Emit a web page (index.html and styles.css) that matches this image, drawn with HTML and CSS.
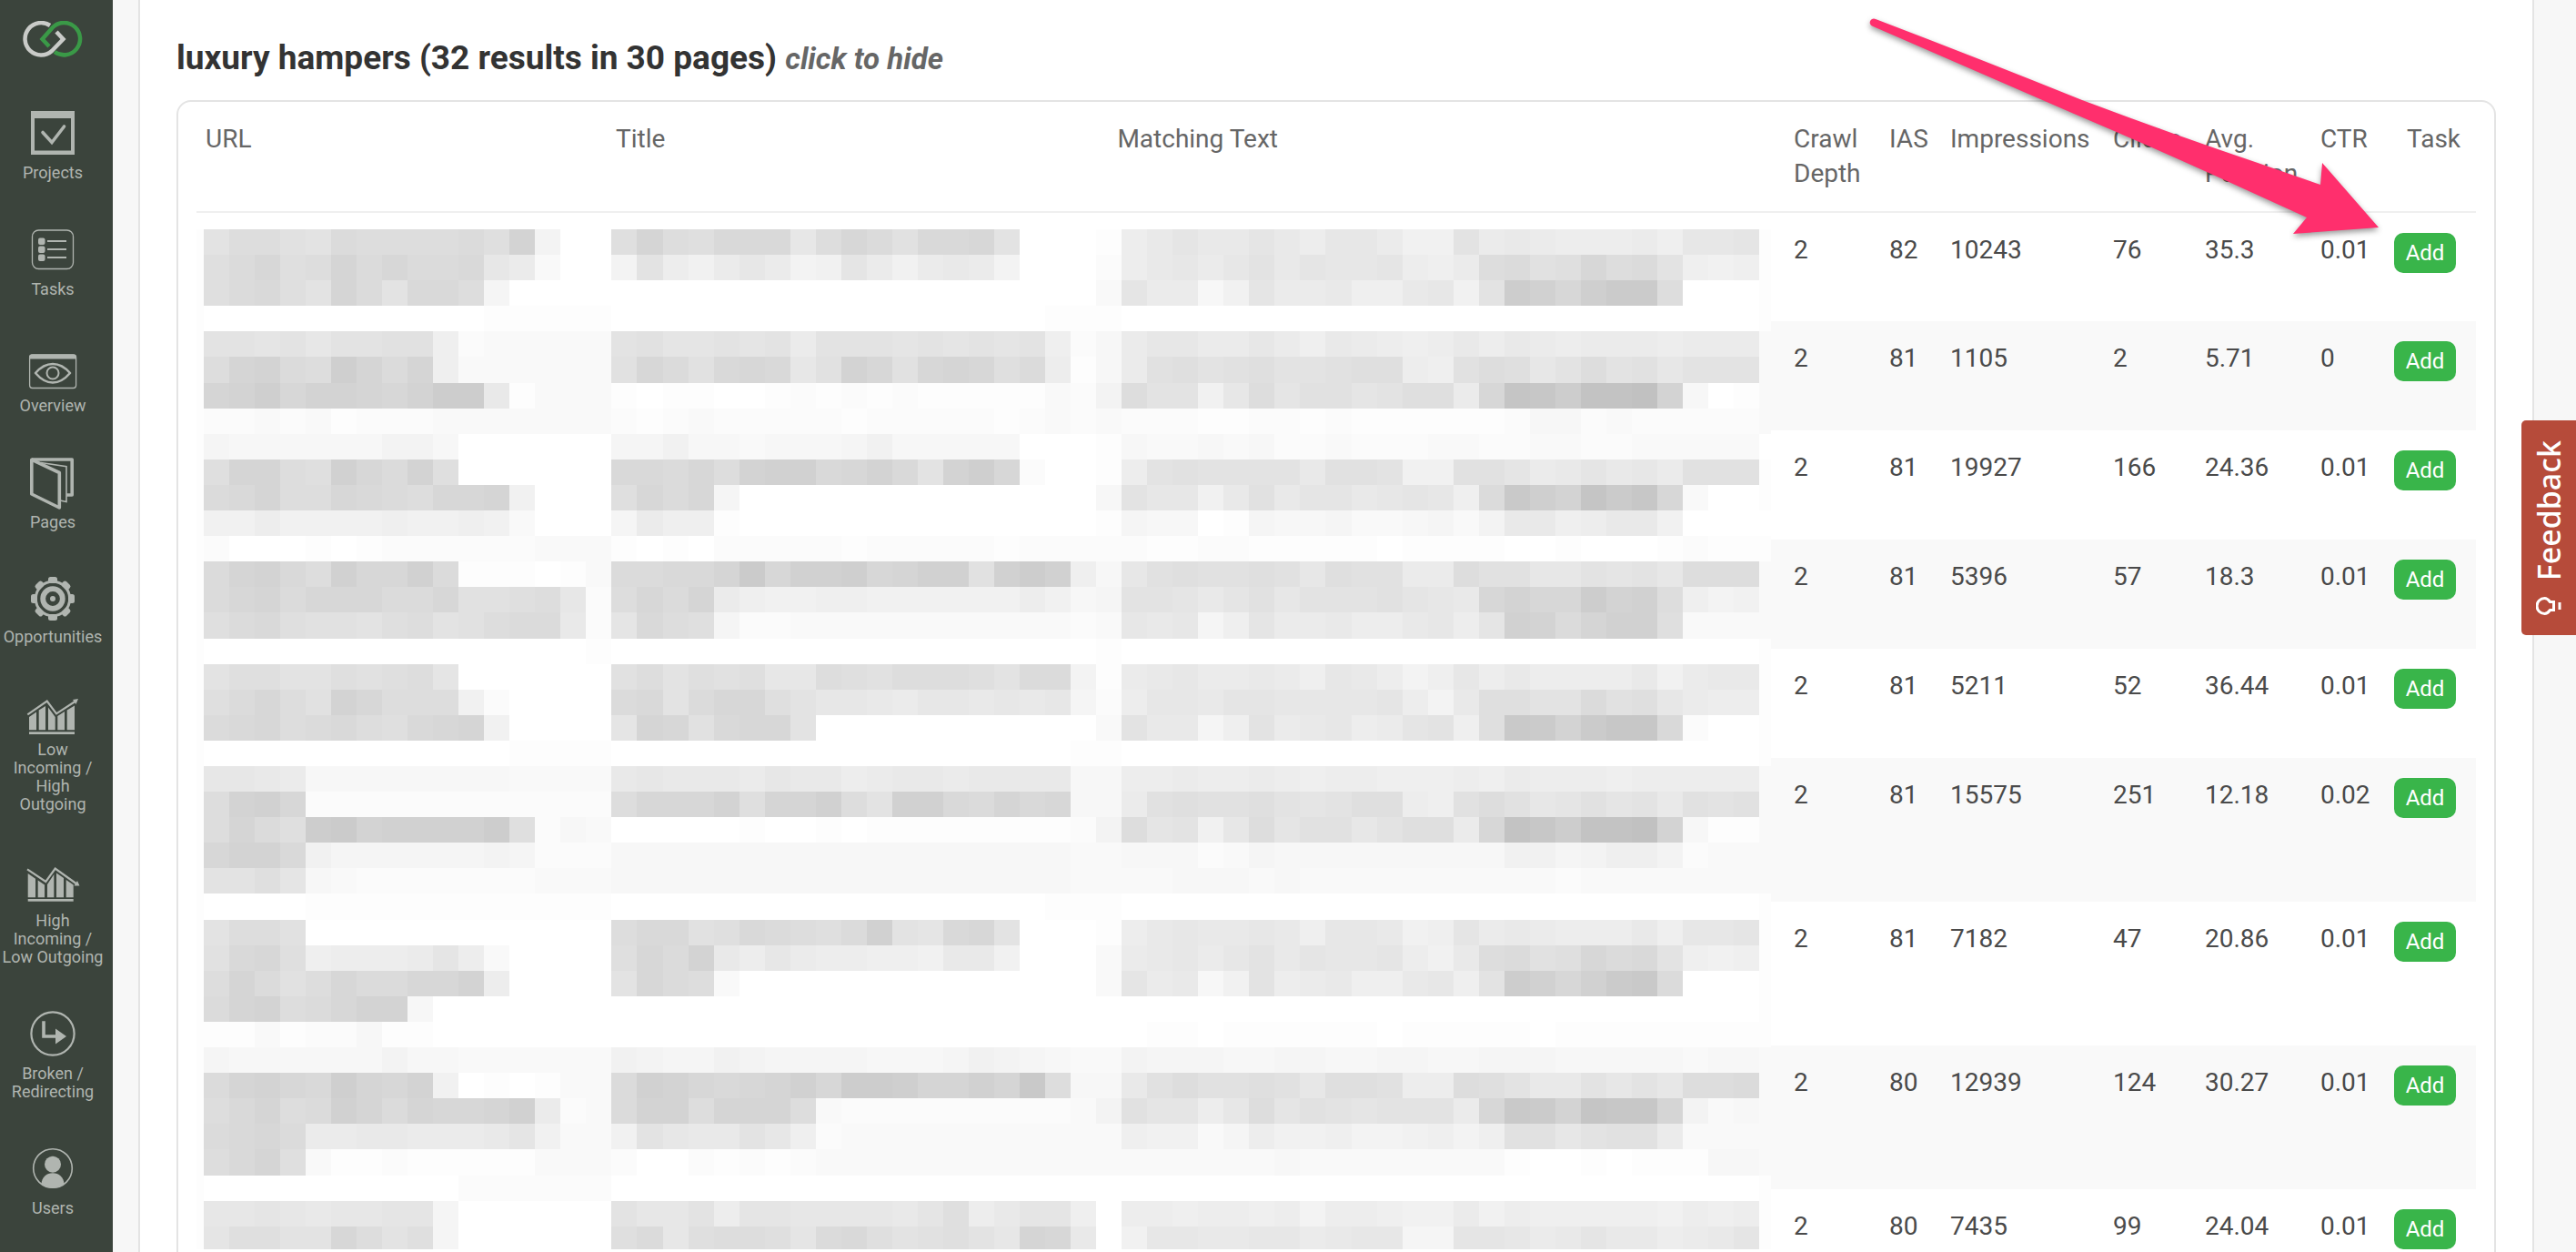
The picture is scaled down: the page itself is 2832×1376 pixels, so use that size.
FILE: index.html
```html
<!DOCTYPE html>
<html lang="en">
<head>
    <meta charset="UTF-8">
    <meta name="viewport" content="width=device-width, initial-scale=1.0">
    <title>Opportunities</title>
    <link rel="stylesheet" href="styles.css">
</head>
<body>

    <nav class="sidebar">
        <a href="#" class="logo" aria-label="Home">
            <svg width="66" height="40" viewBox="25 23 66 40" fill="none" stroke-width="4.5">
                <path stroke="#3a9947" d="M60 57 A17.7 17.7 0 1 0 58 30 L46.500 43 L54 51"/>
                <path stroke="#c9cbc8" d="M55 28 A17.7 17.7 0 1 0 57 56 L69.500 43 L62 35"/>
            </svg>
        </a>
        <a href="#" class="nav-item">
            <svg width="60" height="60" viewBox="0 0 60 60" fill="none" stroke="currentColor">
                <path fill="currentColor" stroke="none" fill-rule="evenodd" d="M6 2h48v48H6z M10 10v35.500h40V10z"/>
                <path stroke-width="3.600" stroke-linecap="round" d="M19 25.500 L29 36.500 L42.500 19"/>
            </svg>
            <span>Projects</span>
        </a>
        <a href="#" class="nav-item">
            <svg width="60" height="60" viewBox="0 0 60 60" fill="none" stroke="currentColor">
                <rect x="7.500" y="5" width="45" height="42.500" rx="7" stroke-width="1.300"/>
                <g fill="currentColor" stroke="none">
                    <rect x="14" y="13.500" width="7.500" height="7.500" rx="2"/>
                    <rect x="14" y="22.500" width="7.500" height="7.500" rx="2"/>
                    <rect x="14" y="31.500" width="7.500" height="7.500" rx="2"/>
                </g>
                <path stroke-width="2" d="M24 17h21M24 26h21M24 35h21"/>
            </svg>
            <span>Tasks</span>
        </a>
        <a href="#" class="nav-item">
            <svg width="60" height="60" viewBox="0 0 60 60" fill="none" stroke="currentColor">
                <rect x="4.600" y="14" width="51" height="36.500" rx="3" stroke-width="1.300"/>
                <path fill="currentColor" stroke="none" d="M4 18.500v-2a3 3 0 0 1 3-3h46a3 3 0 0 1 3 3v2z"/>
                <path stroke-width="2.600" stroke-linejoin="round" d="M11 34 C17 27 23 24 30 24 S43 27 49 34 C43 41 37 44.500 30 44.500 S17 41 11 34z"/>
                <circle cx="30" cy="34" r="6.500" stroke-width="2"/>
            </svg>
            <span>Overview</span>
        </a>
        <a href="#" class="nav-item">
            <svg width="60" height="60" viewBox="0 0 60 60" fill="none" stroke="currentColor">
                <g stroke-width="3.600" stroke-linejoin="round">
                    <path d="M6.800 1.200 L37.300 15.500 V54 L6.800 39z"/>
                    <path d="M6.800 1 H51.200 V40 H45"/>
                </g>
                <path stroke-width="1.600" d="M17 4.500 L45 8.800 V47.500 L38 46"/>
            </svg>
            <span>Pages</span>
        </a>
        <a href="#" class="nav-item">
            <svg width="60" height="58" viewBox="0 0 60 58" fill="none" stroke="currentColor">
                <circle cx="30" cy="26" r="18.700" stroke-width="3"/>
                <g fill="currentColor" stroke="none">
                    <rect id="tooth" x="25" y="2" width="10" height="7" rx="2.500"/>
                    <use href="#tooth" transform="rotate(45 30 26)"/>
                    <use href="#tooth" transform="rotate(90 30 26)"/>
                    <use href="#tooth" transform="rotate(135 30 26)"/>
                    <use href="#tooth" transform="rotate(180 30 26)"/>
                    <use href="#tooth" transform="rotate(225 30 26)"/>
                    <use href="#tooth" transform="rotate(270 30 26)"/>
                    <use href="#tooth" transform="rotate(315 30 26)"/>
                </g>
                <circle cx="30" cy="26" r="10.800" stroke-width="5.800"/>
                <circle cx="30" cy="26" r="3" fill="currentColor" stroke="none"/>
            </svg>
            <span>Opportunities</span>
        </a>
        <a href="#" class="nav-item">
            <svg width="60" height="56" viewBox="0 0 60 56" fill="currentColor">
                <path fill="none" stroke="currentColor" stroke-width="2.200" d="M2.300 27.300 L23.700 12.500 L34 26.300 L56 12"/>
                <path d="M58 10 L52 11 L55.500 16z"/>
                <path d="M4 30 L12 24.500 V44.300 H4z M14.700 22.500 L18 20.500 L22 18 V44.300 H14.700z M25 19.500 L32.700 30 V44.300 H25z M35.300 29 L43 24 V44.300 H35.300z M45.700 22.500 L54 17.500 V44.300 H45.700z"/>
                <rect x="4" y="46.300" width="50" height="2.700"/>
            </svg>
            <span>Low<br>Incoming /<br>High<br>Outgoing</span>
        </a>
        <a href="#" class="nav-item">
            <svg width="60" height="60" viewBox="0 0 60 60" fill="currentColor">
                <path fill="none" stroke="currentColor" stroke-width="2.200" d="M2 13.300 L22.300 27 L32.700 12.500 L57 30"/>
                <path d="M59.500 31.500 L53.500 31.500 L57 26z"/>
                <path d="M2.700 18 L11 23.700 V44.300 H2.700z M13.700 25.500 L21 30.500 V44.300 H13.700z M24 30 L31.300 19 V44.300 H24z M34 17.500 L42 23 V44.300 H34z M44.700 25 L52.700 30.500 V44.300 H44.700z"/>
                <rect x="2.700" y="46" width="50" height="2.700"/>
            </svg>
            <span>High<br>Incoming /<br>Low Outgoing</span>
        </a>
        <a href="#" class="nav-item">
            <svg width="60" height="60" viewBox="0 0 60 60" fill="none" stroke="currentColor">
                <circle cx="30" cy="26" r="23.600" stroke-width="2.200"/>
                <path stroke-width="3.600" d="M20 12.300 V29 H34"/>
                <path fill="currentColor" stroke="none" d="M33 20.500 L45 29 L33 37.500z"/>
            </svg>
            <span>Broken /<br>Redirecting</span>
        </a>
        <a href="#" class="nav-item">
            <svg width="60" height="60" viewBox="0 0 60 60" fill="none" stroke="currentColor">
                <circle cx="30" cy="26" r="21.300" stroke-width="1.600"/>
                <circle cx="30" cy="21.700" r="9" fill="currentColor" stroke="none"/>
                <path fill="currentColor" stroke="none" d="M17.500 43 C18 36 23 31.300 30 31.300 S42 36 42.500 43 Q30 52.500 17.500 43z"/>
            </svg>
            <span>Users</span>
        </a>
    </nav>

    <main class="panel">
        <h3 class="keyword">luxury hampers (32 results in 30 pages) <em>click to hide</em></h3>

        <div class="results">
            <table>
                <colgroup>
                    <col class="col-url">
                    <col class="col-title">
                    <col class="col-text">
                    <col class="col-depth">
                    <col class="col-ias">
                    <col class="col-impressions">
                    <col class="col-clicks">
                    <col class="col-position">
                    <col class="col-ctr">
                    <col class="col-task">
                </colgroup>
                <thead>
                    <tr>
                        <th>URL</th>
                        <th>Title</th>
                        <th>Matching Text</th>
                        <th>Crawl Depth</th>
                        <th>IAS</th>
                        <th>Impressions</th>
                        <th>Clicks</th>
                        <th>Avg. Position</th>
                        <th>CTR</th>
                        <th class="task">Task</th>
                    </tr>
                </thead>
                <tbody>
                    <tr>
                        <td></td><td></td><td></td>
                        <td>2</td><td>82</td><td>10243</td><td>76</td><td>35.3</td><td>0.01</td>
                        <td><button type="button">Add</button></td>
                    </tr>
                    <tr>
                        <td></td><td></td><td></td>
                        <td>2</td><td>81</td><td>1105</td><td>2</td><td>5.71</td><td>0</td>
                        <td><button type="button">Add</button></td>
                    </tr>
                    <tr>
                        <td></td><td></td><td></td>
                        <td>2</td><td>81</td><td>19927</td><td>166</td><td>24.36</td><td>0.01</td>
                        <td><button type="button">Add</button></td>
                    </tr>
                    <tr>
                        <td></td><td></td><td></td>
                        <td>2</td><td>81</td><td>5396</td><td>57</td><td>18.3</td><td>0.01</td>
                        <td><button type="button">Add</button></td>
                    </tr>
                    <tr>
                        <td></td><td></td><td></td>
                        <td>2</td><td>81</td><td>5211</td><td>52</td><td>36.44</td><td>0.01</td>
                        <td><button type="button">Add</button></td>
                    </tr>
                    <tr class="long">
                        <td></td><td></td><td></td>
                        <td>2</td><td>81</td><td>15575</td><td>251</td><td>12.18</td><td>0.02</td>
                        <td><button type="button">Add</button></td>
                    </tr>
                    <tr class="long">
                        <td></td><td></td><td></td>
                        <td>2</td><td>81</td><td>7182</td><td>47</td><td>20.86</td><td>0.01</td>
                        <td><button type="button">Add</button></td>
                    </tr>
                    <tr class="long">
                        <td></td><td></td><td></td>
                        <td>2</td><td>80</td><td>12939</td><td>124</td><td>30.27</td><td>0.01</td>
                        <td><button type="button">Add</button></td>
                    </tr>
                    <tr class="long">
                        <td></td><td></td><td></td>
                        <td>2</td><td>80</td><td>7435</td><td>99</td><td>24.04</td><td>0.01</td>
                        <td><button type="button">Add</button></td>
                    </tr>
                </tbody>
            </table>
            <!-- Pixelated cover for the URL, Title and Matching Text columns, filled by mosaic.js -->
            <svg class="mosaic" id="mosaic" viewBox="-0.28 0 61.75 39.9" preserveAspectRatio="none" shape-rendering="crispEdges" aria-hidden="true"></svg>
        </div>

        <svg class="pointer" width="600" height="280" viewBox="2040 0 600 280" aria-hidden="true">
            <path fill="#ff2f6d" d="M2062 21 Q2180 66 2289 110 Q2390 148 2485 180 L2551 203 L2553 179 L2615 250 L2521 257 L2536 239 L2435 193 Q2360 159 2280 125 L2058 28.500 A4 4 0 0 1 2062 21z"/>
        </svg>
    </main>

    <button type="button" class="feedback">
        <svg width="28" height="20" viewBox="0 0 28 20" fill="none" stroke="#fff" stroke-width="3" aria-hidden="true">
            <path d="M19.500 5.500 L15.500 5.500 C13.500 2.800 11.500 1.500 9.500 1.500 A8.300 8.300 0 0 0 9.500 18.500 C11.500 18.500 13.500 17.200 15.500 14.500 L19.500 14.500 z"/>
            <path d="M26 6 V14"/>
        </svg>
        <span>Feedback</span>
    </button>

    <script src="mosaic.js"></script>
</body>
</html>
```
FILE: styles.css
```css
* {
    box-sizing: border-box;
}

body {
    font-family: Roboto, 'Liberation Sans', sans-serif;
    font-size: 28px;
    line-height: 38px;
    color: #4a4a4a;
    background-color: #f7f7f7;
    margin: 0;
    display: flex;
    height: 100vh;
    overflow: hidden;
}

/* Sidebar */
.sidebar {
    flex: none;
    width: 124px;
    padding: 23px 8px 0 0;
    background-color: #3b443c;
    display: flex;
    flex-direction: column;
    align-items: center;
    gap: 48px;
}

.logo {
    display: flex;
    margin-bottom: 9px;
}

.nav-item {
    display: flex;
    flex-direction: column;
    align-items: center;
    color: #b0b5b0;
    font-size: 18px;
    line-height: 20px;
    text-align: center;
    text-decoration: none;
    white-space: nowrap;
}

.nav-item svg {
    overflow: visible;
}

/* Content */
.panel {
    position: relative;
    flex: 1;
    min-width: 0;
    margin: 0 46px 0 28px;
    padding: 40px 40px 0;
    background-color: #fff;
    border: 2px solid #e4e4e4;
    border-width: 0 2px;
}

.keyword {
    margin: 0 0 22px;
    font-size: 37px;
    line-height: 48px;
    font-weight: 700;
    color: #333;
}

.keyword em {
    font-size: 33px;
    line-height: 1;
    color: #666;
}

.results {
    position: relative;
    border: 2px solid #e4e4e4;
    border-radius: 16px;
    padding: 0 20px;
}

table {
    width: 100%;
    table-layout: fixed;
    border-collapse: collapse;
}

.col-url { width: 18%; }
.col-title { width: 22%; }
.col-depth { width: 105px; }
.col-ias { width: 67px; }
.col-impressions { width: 179px; }
.col-clicks { width: 101px; }
.col-position { width: 127px; }
.col-ctr { width: 81px; }
.col-task { width: 100px; }

th,
td {
    padding: 22px 0 22px 10px;
    text-align: left;
    vertical-align: top;
}

th {
    font-weight: 400;
    color: #666;
}

thead tr {
    border-bottom: 2px solid #efefef;
}

th.task {
    padding-left: 24px;
}

tbody tr {
    height: 120px;
}

tbody tr.long {
    height: 158px;
}

tbody tr:nth-child(even) {
    background-color: #f9f9f9;
}

td button {
    display: block;
    width: 68px;
    height: 44px;
    padding: 0;
    border: none;
    border-radius: 10px;
    background-color: #39b54a;
    color: #fff;
    font-family: inherit;
    font-size: 24px;
    cursor: pointer;
}

.mosaic {
    position: absolute;
    top: 140px;
    left: 20px;
    width: 68%;
    height: 1121px;
}

.pointer {
    position: absolute;
    top: 0;
    right: 144px;
    filter: drop-shadow(0 3px 3px rgba(0, 0, 0, 0.4));
}

/* Feedback tab on the right edge */
.feedback {
    position: fixed;
    right: 0;
    top: 462px;
    width: 60px;
    height: 236px;
    padding: 0;
    border: none;
    border-radius: 5px 0 0 5px;
    background-color: #b64b3a;
    color: #fff;
    display: flex;
    flex-direction: column-reverse;
    align-items: center;
    justify-content: center;
    gap: 18px;
    font-family: 'Noto Sans', sans-serif;
    font-size: 34px;
    font-weight: 500;
    line-height: 40px;
    cursor: pointer;
}

.feedback span {
    writing-mode: vertical-rl;
    transform: rotate(180deg);
}
```
FILE: mosaic.js
```js
// One string per mosaic line: URL | Title | Matching Text.
// Each character is a base 36 level, 0 is white and every step is 2 darker.
const lines = [
    'ehhfeihhhhigm600|glhgjjjchkifjjke0001|9bdbbdb9cca77eaba999a8ccd1',
    'gikghlikiijca300|6e97aca67da7aba60002|9bcacebdccd98ahifgkhie8781',
    'gijgeliejjh50000|00000000000000000003|daa47daab88bc7epnkoqqh0001',
    '0000000000011111|00000000000000000111|00000000000000000000000001',
    'eedeceeff8233333|efddedeaeeededede824|accaaca8ba989b9ba9aaa9aaa3',
    'hlmiholil8333333|fkifjkjcfmkfklkgi914|afgefgeefgg98fhgcehefceee3',
    'lmokmmlkmppb1333|10110012121211111326|hee7chdffdeggaktspuuvm4013',
    '2232312223333333|21232222212222212323|22211221211111124423222223',
    '5444444664000000|55744344457444440001|43343422322233223322333330',
    'gllhgnkimg000000|jjikhmnnjkmjemok2001|9efeeeebffe77ffdabdbcafff1',
    'ijlhhkjihkkl7000|gkik5000000000000004|ecc7bfbddbcdc8iromtqsk3001',
    '7797777877873000|5a881000000000000001|544015445334536bb89bb70000',
    '2000101222222333|10102222212222212222|21122111110111100100012111',
    'ilmjhnkkni111013|iijjlqknnoklnnfnpn84|cfgffgfcgffaahffccedechhh3',
    'iklikkkiikffghc2|hkila877887777779745|eedbdfceeefdcbkmkkpmnh8673',
    'gijgffeghefhiib2|djhg5223333333333323|cbc58daab99bc9dnmilnng3333',
    '0000000000000001|00000000000000000001|00000000000000000000000001',
    'eggeegfghd000000|fhegfgcchgfhhhgeii61|abcaaba8cb968c9b9999b7abb1',
    'gikhfmkhhh720000|ijeikkgeccbaccbcbc52|9ccbddccccd96bggeeifgca991',
    'ijkhijhgjkl70000|dlkfjkke000000000003|ebb58eabc9ade8grqmqssj2001',
    '0000000000001111|00000000000000000011|00000000000000000000000001',
    'ccba444444443333|bcbbbacbb9abbabbbb44|99a99a989988898a9998999993',
    'hmnk222222222222|hkkkmgllnhennjiljk44|afgffgedegg98fhfcdfdebfef3',
    'hligpqmnnnnpg243|00000100101111111126|hde7chdffceggakuspuuvm4113',
    'kmmj755555565222|44444444444444444433|44423544444444477568862333',
    'eegd432222222333|44444444444444444433|33444343333333333233333333',
    '0000111111111111|00000000000000000111|00000000000000000000000001',
    'ehhf000000000000|hjjfgjihginedjke0001|9bcbbcb8ccb78daba999b8ccd1',
    'fjkg8999ad930000|gkimb9ca99887bb70003|abcacebdccd97bhifgkije8781',
    'hlifhkiikkm90000|ekih3000000000000003|dab47e9ab88bc8epnknqri0001',
    'ilmhikmm40000000|00000000000000000000|00000000000000000000000001',
    '1131224110000000|00000000000000000000|01101111110111110111111111',
    '5444444644333333|76557655554445765433|65554455445544555444443443',
    'ilmkjolkm7010133|inmkjklnkppollnlrh44|bfhffgfcggf99hgebbecechhi3',
    'hjlhinlilkklna23|immhlllh322222222236|fdd9chdfedeeeakrqmtssl6343',
    'ijkiaabbaaabd733|7ecbbec8233333333333|877359778667868ffceffa3333',
    'hjlg311211111333|20021212333333333333|33333343333333310010111443',
    '0000000000222222|00000000000000000000|00000000000000000000000001',
    'ccdcbccdd5000000|ecce9ddccccbdg9bdd80|9989989699877a798888879891',
    'dggeekheg5000000|gicghhgdijgefgeclkb0|7ccbbccabcc55ddcabdbb9abd1'
];

const svg = document.getElementById('mosaic');

function addRect(x, y, width, level) {
    const gray = 255 - 2 * parseInt(level, 36);
    const rect = document.createElementNS('http://www.w3.org/2000/svg', 'rect');
    rect.setAttribute('x', x);
    rect.setAttribute('y', y);
    rect.setAttribute('width', width);
    rect.setAttribute('height', 1.02);
    rect.setAttribute('fill', `rgb(${gray}, ${gray}, ${gray})`);
    svg.appendChild(rect);
}

lines.forEach((line, y) => {
    const cells = line.replaceAll('|', '');
    addRect(-0.28, y, 0.28, '1');
    // neighbours of the same level share one rect
    for (let x = 0; x < cells.length;) {
        let end = x + 1;
        while (end < cells.length && cells[end] === cells[x]) {
            end++;
        }
        addRect(x, y, end - x, cells[x]);
        x = end;
    }
});
```
